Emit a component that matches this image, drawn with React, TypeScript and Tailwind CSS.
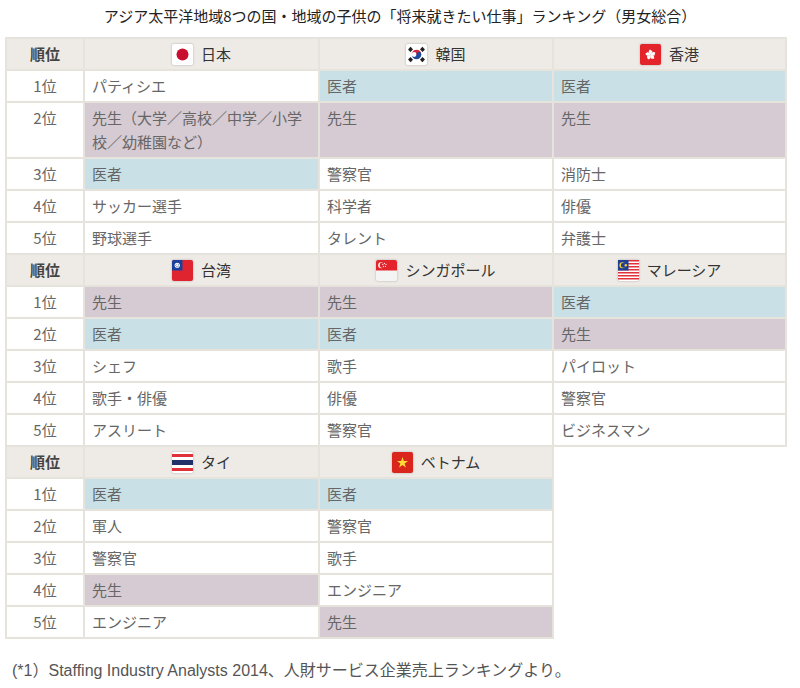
import React from "react";

type Cell = { t: string; c?: "b" | "p" };

const FlagJP = () => (
  <svg width="21" height="21" viewBox="0 0 21 21">
    <rect x="0" y="0" width="21" height="21" rx="2" fill="#ffffff" />
    <circle cx="10.5" cy="10.5" r="6" fill="#c8102e" />
  </svg>
);

const FlagKR = () => (
  <svg width="21" height="21" viewBox="0 0 21 21">
    <rect x="0" y="0" width="21" height="21" rx="2" fill="#ffffff" />
    <path d="M5.7 10.5 A4.8 4.8 0 0 1 15.3 10.5 A2.4 2.4 0 0 1 10.5 10.5 A2.4 2.4 0 0 0 5.7 10.5 Z" fill="#d0273e" />
    <path d="M5.7 10.5 A2.4 2.4 0 0 0 10.5 10.5 A2.4 2.4 0 0 1 15.3 10.5 A4.8 4.8 0 0 1 5.7 10.5 Z" fill="#1d4a9c" />
    <g stroke="#222" strokeWidth="1.2">
      <path d="M2.5 6 L5 3.2 M3.3 6.8 L5.8 4 M4.1 7.6 L6.6 4.8" />
      <path d="M16 3.2 L18.5 6 M15.2 4 L17.7 6.8 M14.4 4.8 L16.9 7.6" />
      <path d="M2.5 15 L5 17.8 M3.3 14.2 L5.8 17 M4.1 13.4 L6.6 16.2" />
      <path d="M16 17.8 L18.5 15 M15.2 17 L17.7 14.2 M14.4 16.2 L16.9 13.4" />
    </g>
  </svg>
);

const FlagHK = () => (
  <svg width="21" height="21" viewBox="0 0 21 21">
    <rect x="0" y="0" width="21" height="21" rx="2" fill="#e3242b" />
    <g fill="#ffffff" transform="translate(10.5 10.8)">
      {[0, 72, 144, 216, 288].map((a) => (
        <path key={a} transform={`rotate(${a})`} d="M0 0 C-2.2 -1.2 -2.4 -4 -0.6 -5.2 C0.4 -4.4 1.6 -4.2 2 -3.2 C1.2 -2.2 0.8 -1 0 0 Z" />
      ))}
    </g>
  </svg>
);

const FlagTW = () => (
  <svg width="21" height="21" viewBox="0 0 21 21">
    <rect x="0" y="0" width="21" height="21" rx="2" fill="#e0242f" />
    <path d="M2 0 H10.5 V10.5 H0 V2 A2 2 0 0 1 2 0 Z" fill="#1b3f9a" />
    <circle cx="5.25" cy="5.25" r="2.6" fill="#ffffff" />
    <circle cx="5.25" cy="5.25" r="1.6" fill="#1b3f9a" />
    <circle cx="5.25" cy="5.25" r="1.2" fill="#ffffff" />
  </svg>
);

const FlagSG = () => (
  <svg width="21" height="21" viewBox="0 0 21 21">
    <rect x="0" y="0" width="21" height="21" rx="2" fill="#f4f4f4" />
    <path d="M2 0 H19 A2 2 0 0 1 21 2 V10.5 H0 V2 A2 2 0 0 1 2 0 Z" fill="#e3242b" />
    <circle cx="5.2" cy="5.2" r="3" fill="#ffffff" />
    <circle cx="6.4" cy="5.2" r="2.7" fill="#e3242b" />
    <g fill="#ffffff">
      <circle cx="8.4" cy="3.3" r="0.6" />
      <circle cx="10" cy="4.4" r="0.6" />
      <circle cx="9.4" cy="6.3" r="0.6" />
      <circle cx="7.4" cy="6.3" r="0.6" />
      <circle cx="6.8" cy="4.4" r="0.6" />
    </g>
  </svg>
);

const FlagMY = () => (
  <svg width="21" height="21" viewBox="0 0 21 21">
    <rect x="0" y="0" width="21" height="21" rx="2" fill="#ffffff" />
    {[0, 3, 6, 9, 12, 15, 18].map((y) => (
      <rect key={y} x="0" y={y} width="21" height="1.5" fill="#e0313a" />
    ))}
    <rect x="0" y="0" width="10.5" height="10.5" fill="#1f3f95" />
    <circle cx="4.4" cy="5.2" r="3" fill="#f9d22c" />
    <circle cx="5.4" cy="5.2" r="2.5" fill="#1f3f95" />
    <circle cx="7.8" cy="5.2" r="1.2" fill="#f9d22c" />
  </svg>
);

const FlagTH = () => (
  <svg width="21" height="21" viewBox="0 0 21 21">
    <rect x="0" y="0" width="21" height="21" rx="2" fill="#ffffff" />
    <rect x="0" y="2" width="21" height="3" fill="#e0313a" />
    <rect x="0" y="8" width="21" height="5" fill="#22306a" />
    <rect x="0" y="16" width="21" height="3" fill="#e0313a" />
  </svg>
);

const FlagVN = () => (
  <svg width="21" height="21" viewBox="0 0 21 21">
    <rect x="0" y="0" width="21" height="21" rx="2" fill="#da251d" />
    <path
      d="M10.5 5 L11.8 9 L16 9 L12.6 11.4 L13.9 15.4 L10.5 13 L7.1 15.4 L8.4 11.4 L5 9 L9.2 9 Z"
      fill="#ffdd33"
    />
  </svg>
);

type Country = { name: string; flag: React.ReactNode };

const blocks: { countries: Country[]; rows: Cell[][] }[] = [
  {
    countries: [
      { name: "日本", flag: <FlagJP /> },
      { name: "韓国", flag: <FlagKR /> },
      { name: "香港", flag: <FlagHK /> },
    ],
    rows: [
      [{ t: "パティシエ" }, { t: "医者", c: "b" }, { t: "医者", c: "b" }],
      [
        { t: "先生（大学／高校／中学／小学校／幼稚園など）", c: "p" },
        { t: "先生", c: "p" },
        { t: "先生", c: "p" },
      ],
      [{ t: "医者", c: "b" }, { t: "警察官" }, { t: "消防士" }],
      [{ t: "サッカー選手" }, { t: "科学者" }, { t: "俳優" }],
      [{ t: "野球選手" }, { t: "タレント" }, { t: "弁護士" }],
    ],
  },
  {
    countries: [
      { name: "台湾", flag: <FlagTW /> },
      { name: "シンガポール", flag: <FlagSG /> },
      { name: "マレーシア", flag: <FlagMY /> },
    ],
    rows: [
      [{ t: "先生", c: "p" }, { t: "先生", c: "p" }, { t: "医者", c: "b" }],
      [{ t: "医者", c: "b" }, { t: "医者", c: "b" }, { t: "先生", c: "p" }],
      [{ t: "シェフ" }, { t: "歌手" }, { t: "パイロット" }],
      [{ t: "歌手・俳優" }, { t: "俳優" }, { t: "警察官" }],
      [{ t: "アスリート" }, { t: "警察官" }, { t: "ビジネスマン" }],
    ],
  },
  {
    countries: [
      { name: "タイ", flag: <FlagTH /> },
      { name: "ベトナム", flag: <FlagVN /> },
    ],
    rows: [
      [{ t: "医者", c: "b" }, { t: "医者", c: "b" }],
      [{ t: "軍人" }, { t: "警察官" }],
      [{ t: "警察官" }, { t: "歌手" }],
      [{ t: "先生", c: "p" }, { t: "エンジニア" }],
      [{ t: "エンジニア" }, { t: "先生", c: "p" }],
    ],
  },
];

const bgOf = (c?: "b" | "p") =>
  c === "b" ? "bg-[#c9e1e6]" : c === "p" ? "bg-[#d6cad3]" : "bg-white";

function Block({ b, first }: { b: (typeof blocks)[number]; first: boolean }) {
  const three = b.countries.length === 3;
  return (
    <div
      className={`grid gap-[2px] bg-[#e6e2dc] px-[2px] pb-[2px] ${first ? "pt-[2px]" : "pt-0"} ${
        three ? "w-[782px] grid-cols-[76px_233px_232px_231px]" : "w-[549px] grid-cols-[76px_233px_232px]"
      }`}
    >
      <div className="bg-[#eeebe7] h-[30px] flex items-center justify-center font-bold text-[15px] text-[#444]">
        順位
      </div>
      {b.countries.map((c) => (
        <div
          key={c.name}
          className="bg-[#eeebe7] h-[30px] flex items-center justify-center gap-[8px] text-[15px] text-[#333]"
        >
          <span className="flex drop-shadow-[0_0_1px_rgba(0,0,0,0.25)]">{c.flag}</span>
          <span>{c.name}</span>
        </div>
      ))}
      {b.rows.map((row, i) => (
        <React.Fragment key={i}>
          <div className="bg-white min-h-[30px] flex items-start justify-center py-[3px] leading-[24px] text-[15px] text-[#666]">
            {i + 1}位
          </div>
          {row.map((cell, j) => (
            <div
              key={j}
              className={`${bgOf(cell.c)} min-h-[30px] py-[3px] px-[7px] leading-[24px] text-[15px] text-[#666]`}
            >
              {cell.t}
            </div>
          ))}
        </React.Fragment>
      ))}
    </div>
  );
}

export default function App() {
  return (
    <div
      className="w-[800px] h-[688px] bg-white overflow-hidden"
      style={{ fontFamily: '"Noto Sans CJK JP", "Noto Sans", sans-serif' }}
    >
      <div className="h-[37px] pt-[6px] text-center text-[15px] leading-[20px] font-normal text-[#222]">
        アジア太平洋地域8つの国・地域の子供の「将来就きたい仕事」ランキング（男女総合）
      </div>
      <div className="pl-[5px] flex flex-col">
        {blocks.map((b, i) => (
          <Block key={i} b={b} first={i === 0} />
        ))}
      </div>
      <div
        className="mt-[20px] pl-[12px] text-[16px] leading-[24px] text-[#555]"
        style={{ fontFamily: '"Liberation Sans", "Noto Sans CJK JP", sans-serif' }}
      >
        (*1）Staffing Industry Analysts 2014、人財サービス企業売上ランキングより。
      </div>
    </div>
  );
}
